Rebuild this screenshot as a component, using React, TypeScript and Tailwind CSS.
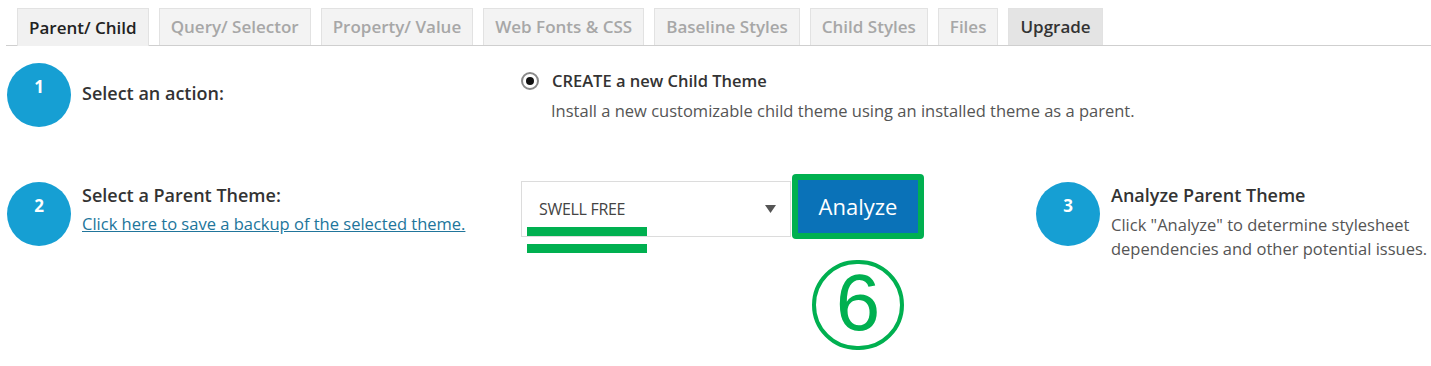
import React from "react";

const font = { fontFamily: '"Open Sans", "Noto Sans", sans-serif' };

function Tab({ label, active, upgrade }: { label: string; active?: boolean; upgrade?: boolean }) {
  let cls =
    "h-[37px] px-[11px] flex items-center text-[17px] font-semibold border border-[#e2e2e2] border-b-0 ";
  if (active) cls += "bg-[#f1f1f1] text-[#222] border-[#d4d4d4] -mb-px relative h-[38px]";
  else if (upgrade) cls += "bg-[#e4e4e4] text-[#333] border-[#d0d0d0]";
  else cls += "bg-[#f3f3f3] text-[#a7a7a7]";
  return <div className={cls}>{label}</div>;
}

function Step({ n }: { n: string }) {
  return (
    <div className="w-[64px] h-[64px] rounded-full bg-[#169fd3] flex justify-center pt-[14px] shrink-0">
      <span className="text-white text-[17px] font-bold leading-[20px]">{n}</span>
    </div>
  );
}

export default function App() {
  return (
    <div className="w-[1431px] h-[366px] bg-white relative overflow-hidden" style={font}>
      <div className="pt-[8px] pl-[6px]">
        <div className="flex items-end gap-[10px] pl-[11px] border-b border-[#cfcfcf]">
          <Tab label="Parent/ Child" active />
          <Tab label="Query/ Selector" />
          <Tab label="Property/ Value" />
          <Tab label="Web Fonts & CSS" />
          <Tab label="Baseline Styles" />
          <Tab label="Child Styles" />
          <Tab label="Files" />
          <Tab label="Upgrade" upgrade />
        </div>
      </div>

      <div className="flex pl-[7px] mt-[17px]">
        <div className="w-[514px] flex items-start">
          <Step n="1" />
          <div className="ml-[11px] mt-[17px] text-[18px] font-semibold text-[#333]">Select an action:</div>
        </div>
        <div className="pt-[6px]">
          <div className="flex items-center">
            <span className="w-[18px] h-[18px] rounded-full border-[2px] border-[#8a8a8a] flex items-center justify-center mr-[13px]">
              <span className="w-[8px] h-[8px] rounded-full bg-[#111]" />
            </span>
            <span className="text-[16.5px] font-semibold text-[#333]">CREATE a new Child Theme</span>
          </div>
          <div className="ml-[30px] mt-[5px] text-[16.5px] text-[#555]">
            Install a new customizable child theme using an installed theme as a parent.
          </div>
        </div>
      </div>

      <div className="flex pl-[7px] mt-[47px]">
        <div className="w-[514px] flex items-start pt-[8px]">
          <Step n="2" />
          <div className="ml-[11px] mt-[0px]">
            <div className="text-[18px] font-semibold text-[#333] leading-[26px]">Select a Parent Theme:</div>
            <a className="block mt-[4px] text-[16.5px] text-[#21759b] underline leading-[24px]" href="#">
              Click here to save a backup of the selected theme.
            </a>
          </div>
        </div>
        <div className="relative w-[270px] h-[56px] mt-[7px] border border-[#dcdcdc] flex items-center pl-[17px] pr-[14px] justify-between">
          <span className="text-[16px] text-[#444] tracking-[-0.3px]">SWELL FREE</span>
          <svg width="11" height="8" viewBox="0 0 11 8"><path d="M0 0 L11 0 L5.5 8 Z" fill="#555" /></svg>
          <div className="absolute left-[5px] top-[45px] w-[120px] h-[9px] bg-[#00b050]" />
          <div className="absolute left-[5px] top-[62px] w-[120px] h-[9px] bg-[#00b050]" />
        </div>
        <div className="ml-[1px] flex flex-col items-center">
          <div className="w-[132px] h-[65px] rounded-[4px] bg-[#00b050] p-[6px]">
            <div className="w-full h-full bg-[#0a72b8] flex items-center justify-center text-white text-[22px]">
              Analyze
            </div>
          </div>
          <div
            className="mt-[21px] w-[92px] h-[90px] rounded-full border-[4px] border-[#00b050] flex items-center justify-center text-[#00b050] text-[80px] leading-none"
            style={{ fontFamily: '"Liberation Sans", sans-serif' }}
          >
            <span className="-mt-[4px]">6</span>
          </div>
        </div>
        <div className="ml-[112px] flex items-start pt-[8px]">
          <Step n="3" />
          <div className="ml-[11px] mt-[0px]">
            <div className="text-[18px] font-semibold text-[#333] leading-[26px]">Analyze Parent Theme</div>
            <div className="mt-[5px] text-[16.5px] text-[#555] leading-[24px]">
              Click "Analyze" to determine stylesheet
              <br />
              dependencies and other potential issues.
            </div>
          </div>
        </div>
      </div>
    </div>
  );
}
